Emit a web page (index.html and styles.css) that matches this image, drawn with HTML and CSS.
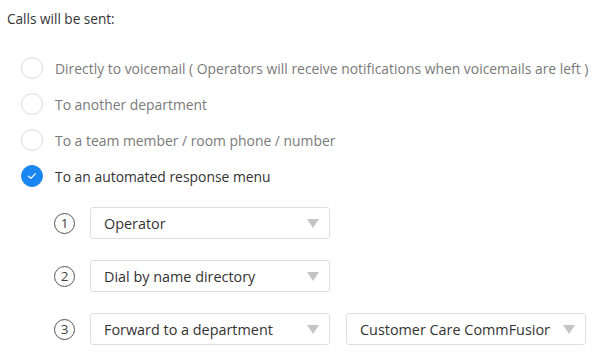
FILE: index.html
```html
<!DOCTYPE html>
<html>
<head>
<meta charset="utf-8">
<link rel="stylesheet" href="styles.css">
</head>
<body>
<div class="page">
  <div class="heading">Calls will be sent:</div>
  <div class="options">
    <div class="option"><span class="radio"></span><span class="label">Directly to voicemail ( Operators will receive notifications when voicemails are left )</span></div>
    <div class="option"><span class="radio"></span><span class="label">To another department</span></div>
    <div class="option"><span class="radio"></span><span class="label">To a team member / room phone / number</span></div>
    <div class="option selected"><span class="radio checked"><svg width="10" height="8" viewBox="0 0 10 8"><path d="M1.5 4.2 L3.9 6.4 L8.5 1.6" fill="none" stroke="#fff" stroke-width="1.2" stroke-linecap="round" stroke-linejoin="round"/></svg></span><span class="label">To an automated response menu</span></div>
  </div>
  <div class="menu">
    <div class="menu-row">
      <span class="num">1</span>
      <div class="select"><span class="value">Operator</span><span class="arrow"></span></div>
    </div>
    <div class="menu-row">
      <span class="num">2</span>
      <div class="select"><span class="value">Dial by name directory</span><span class="arrow"></span></div>
    </div>
    <div class="menu-row">
      <span class="num">3</span>
      <div class="select"><span class="value">Forward to a department</span><span class="arrow"></span></div>
      <div class="select"><span class="value">Customer Care CommFusion</span><span class="arrow"></span></div>
    </div>
  </div>
</div>
</body>
</html>
```
FILE: styles.css
```css
html, body {
  margin: 0;
  padding: 0;
  background: #fff;
}
.page {
  padding: 11px 0 0 7px;
  font-family: "Open Sans", "Noto Sans", sans-serif;
  color: #333;
}
.heading {
  font-size: 13.6px;
  line-height: 16px;
  color: #333;
}
.options {
  margin-top: 23px;
  padding-left: 14px;
}
.option {
  height: 36px;
  display: flex;
  align-items: center;
  gap: 12px;
}
.radio {
  width: 20px;
  height: 20px;
  border: 1px solid #dcdcdc;
  border-radius: 50%;
  box-sizing: content-box;
  flex: none;
  display: flex;
  align-items: center;
  justify-content: center;
}
.radio.checked {
  background: #1a86f2;
  border-color: #1a86f2;
}
.label {
  font-size: 13.9px;
  color: #7a7a7a;
  white-space: nowrap;
}
.option.selected .label {
  color: #333;
}
.menu {
  margin-top: 13px;
  padding-left: 47px;
  display: flex;
  flex-direction: column;
  gap: 21px;
}
.menu-row {
  display: flex;
  align-items: center;
  height: 32px;
}
.num {
  width: 19px;
  height: 19px;
  border: 1.5px solid #555;
  border-radius: 50%;
  display: flex;
  align-items: center;
  justify-content: center;
  font-size: 13.5px;
  color: #444;
  margin-right: 15px;
  flex: none;
}
.select {
  width: 240px;
  height: 32px;
  box-sizing: border-box;
  border: 1px solid #dedede;
  border-radius: 3px;
  display: flex;
  align-items: center;
  padding: 0 10px 0 13px;
  margin-right: 16px;
  flex: none;
}
.value {
  flex: 1;
  font-size: 14.4px;
  color: #333;
  white-space: nowrap;
  overflow: hidden;
}
.arrow {
  width: 0;
  height: 0;
  border-left: 6px solid transparent;
  border-right: 6px solid transparent;
  border-top: 9px solid #c4c4c4;
  margin-left: 13px;
  flex: none;
}
```
